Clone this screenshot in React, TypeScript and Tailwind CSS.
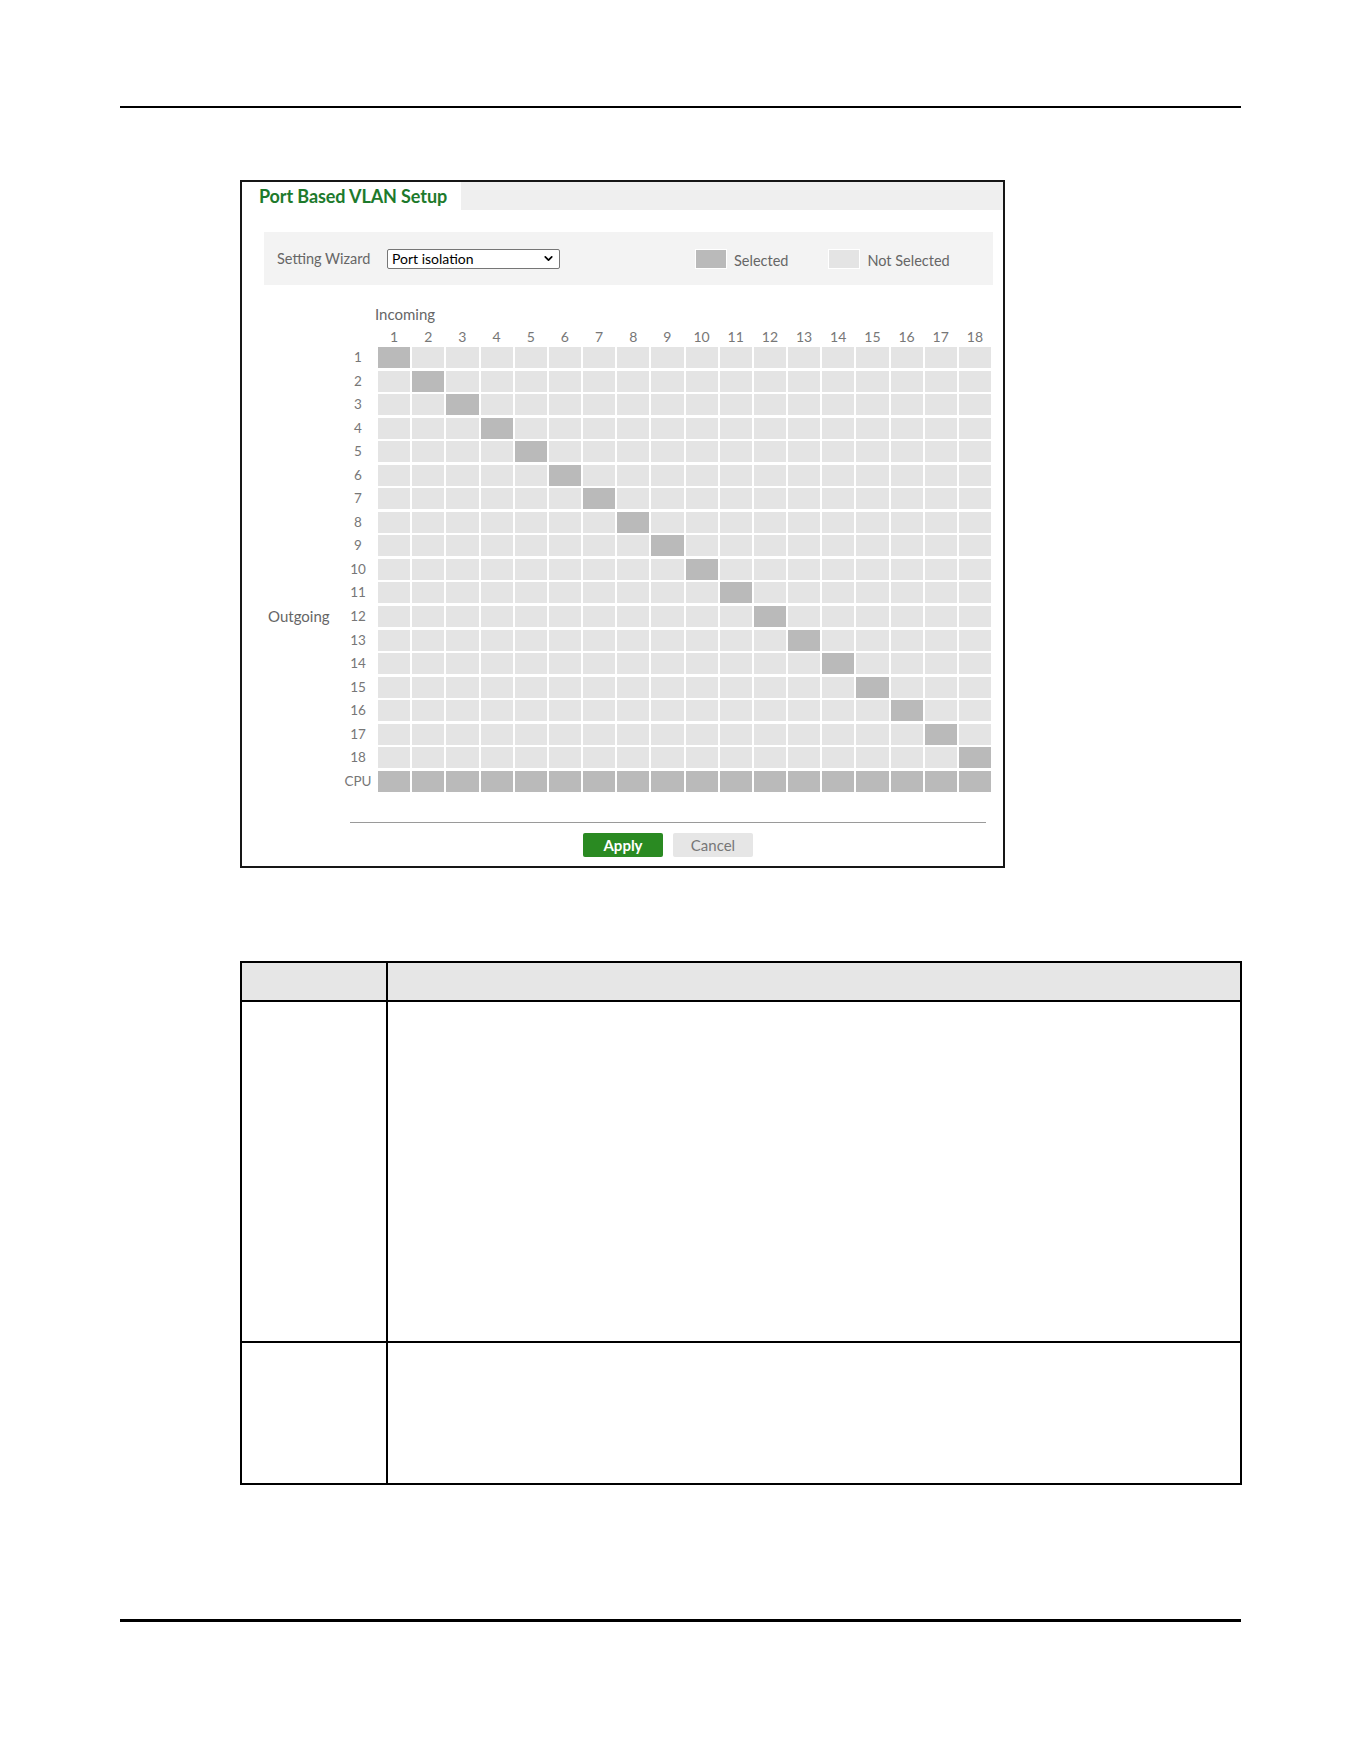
import { ChevronDown } from 'lucide-react';

const PORTS = Array.from({ length: 18 }, (_, i) => i + 1);
const ROWS: string[] = [...PORTS.map(String), 'CPU'];

// a port talks to the CPU and to itself only (port isolation)
function isSelected(row: string, col: number) {
    if (row === 'CPU') return true;
    return Number(row) === col;
}

function Legend({ selected, label }: { selected: boolean; label: string }) {
    return (
        <div className="flex items-center gap-[7px]">
            <div className={`w-[32px] h-[20px] border border-white ${selected ? 'bg-[#bababa]' : 'bg-[#e4e4e4]'}`} />
            <span className="text-[14.5px] text-[#666] pt-[5px]">{label}</span>
        </div>
    );
}

function PortMatrix() {
    return (
        <div className="flex flex-col">
            <div className="pl-[133px] mt-[21px] h-[16px] leading-[16px] text-[15px] text-[#666]">Incoming</div>

            {/* column headers */}
            <div className="flex mt-[6px] h-[18px] items-center">
                <div className="w-[136px] shrink-0" />
                <div className="grid grid-cols-18 gap-x-[2px] w-[613px]">
                    {PORTS.map((p) => (
                        <div key={p} className="text-center text-[14px] text-[#777] leading-[18px]">{p}</div>
                    ))}
                </div>
            </div>

            {/* rows */}
            <div className="flex flex-col gap-y-[2.55px] mt-[1px]">
                {ROWS.map((r) => (
                    <div key={r} className="flex h-[21px] items-center">
                        <div className="w-[98px] shrink-0 pl-[26px] text-[15px] text-[#666] leading-[21px]">
                            {r === '12' ? 'Outgoing' : ''}
                        </div>
                        <div className="w-[36px] shrink-0 text-center text-[13.5px] text-[#777] leading-[21px]">{r}</div>
                        <div className="ml-[2px] grid grid-cols-18 gap-x-[2px] w-[613px] h-full">
                            {PORTS.map((p) => (
                                <div key={p} className={isSelected(r, p) ? 'bg-[#bababa]' : 'bg-[#e4e4e4]'} />
                            ))}
                        </div>
                    </div>
                ))}
            </div>
        </div>
    );
}

function VlanPanel() {
    return (
        <div className="ml-[240px] w-[765px] border-2 border-[#161616] bg-white flex flex-col">
            {/* tab strip */}
            <div className="flex h-[28px]">
                <div className="w-[219px] pl-[17px] flex items-center text-[18px] font-bold text-[#1d7a2c] tracking-[-0.1px]">
                    Port Based VLAN Setup
                </div>
                <div className="flex-1 bg-[#efefef]" />
            </div>

            {/* wizard + legend */}
            <div className="mt-[22px] ml-[22px] mr-[10px] h-[53px] bg-[#f3f3f3] flex items-center pl-[13px]">
                <span className="w-[110px] text-[14.5px] text-[#666]">Setting Wizard</span>
                <div className="w-[173px] h-[20px] border border-[#767676] rounded-[2px] bg-white flex items-center justify-between pl-[4px] pr-[4px]">
                    <span className="text-[14px] text-black leading-none">Port isolation</span>
                    <ChevronDown size={13} strokeWidth={3.2} className="text-black" />
                </div>
                <div className="ml-[135px]">
                    <Legend selected label="Selected" />
                </div>
                <div className="ml-[40px]">
                    <Legend selected={false} label="Not Selected" />
                </div>
            </div>

            <PortMatrix />

            <div className="mt-[30px] ml-[108px] w-[636px] h-[1px] bg-[#9a9a9a]" />
            <div className="ml-[108px] w-[636px] mt-[10px] mb-[9px] flex justify-center gap-[10px]">
                <button className="w-[80px] h-[24px] rounded-[2px] bg-[#2a8a22] text-white text-[15px] font-bold">Apply</button>
                <button className="w-[80px] h-[24px] rounded-[2px] bg-[#e6e6e6] text-[#777] text-[15px]">Cancel</button>
            </div>
        </div>
    );
}

function FieldTable() {
    return (
        <div className="ml-[240px] w-[1002px] border-2 border-black flex flex-col">
            <div className="flex h-[39px] bg-[#e6e6e6] border-b-2 border-black">
                <div className="w-[146px] border-r-2 border-black" />
                <div className="flex-1" />
            </div>
            <div className="flex h-[341px] border-b-2 border-black">
                <div className="w-[146px] border-r-2 border-black" />
                <div className="flex-1" />
            </div>
            <div className="flex h-[140px]">
                <div className="w-[146px] border-r-2 border-black" />
                <div className="flex-1" />
            </div>
        </div>
    );
}

export default function App() {
    return (
        <div className="w-[1361px] h-[1761px] bg-white flex flex-col" style={{ fontFamily: 'Lato, "Liberation Sans", sans-serif' }}>
            <div className="mt-[106px] ml-[120px] w-[1121px] h-[2px] bg-black" />
            <div className="mt-[72px]">
                <VlanPanel />
            </div>
            <div className="mt-[93px]">
                <FieldTable />
            </div>
            <div className="mt-[134px] ml-[120px] w-[1121px] h-[3px] bg-black" />
        </div>
    );
}
